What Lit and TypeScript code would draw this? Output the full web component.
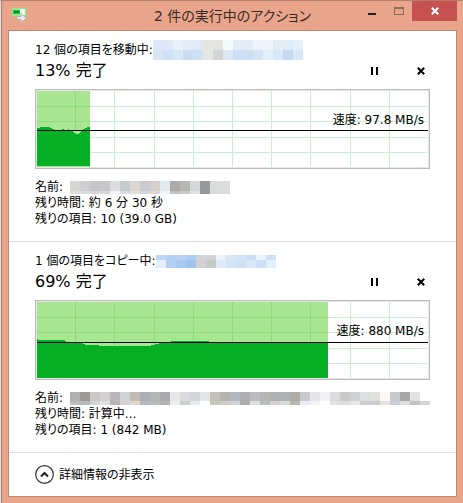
import { LitElement, html, css, svg } from "lit";
import { customElement, property } from "lit/decorators.js";

interface Job {
  heading: string;
  percent: string;
  speed: string;
  remaining: string;
  items: string;
  progress: number;
  level: number;
  area: string;
  target: string[][];
  targetSplit: number;
  targetHeight: number;
  file: string[][];
  fileSplit: number;
}

const jobs: Job[] = [
  {
    heading: "12 個の項目を移動中:",
    percent: "13% 完了",
    speed: "速度: 97.8 MB/s",
    remaining: "残り時間: 約 6 分 30 秒",
    items: "残りの項目: 10 (39.0 GB)",
    progress: 53,
    level: 39,
    area: "M0 37h3v-1h10v1h2v1h2v1h8v-1h2v1h4v-1h1v1h4v2h1v1h1v1h4v-1h1v-1h1v-1h1v-1h1v-1h2v-1h2v-1h3v39H0z",
    target: [
      ["#dce9f8", "#dde9f9", "#e9f1fb", "#e4ebf8", "#dfeaf8", "#e6e5e2", "#e4e4e4", "#f5faff", "#e2edf9", "#e4ecf8", "#eef5fc", "#f0f5fd", "#e0ecf8", "#e0ecf8", "#e4f0fa"],
      ["#dbe6f5", "#cfe1f6", "#d9e8f8", "#cadcf4", "#cde0f5", "#e9e7e2", "#d4d5d6", "#dde6f2", "#cae0f6", "#ccdff5", "#d5e5f5", "#e6f0fb", "#d8e8f8", "#c4d8f2", "#d9e8f8"],
    ],
    targetSplit: 10,
    targetHeight: 20,
    file: [
      ["#d5d7d3", "#cfcdd2", "#c6c6c6", "#c8c8cb", "#e0dbe0", "#c5cdcb", "#dbd6d4", "#c7ccd1", "#d8cfcd", "#e0e9ee", "#aea9a4", "#b5b7b7", "#d4d8d7", "#9a979d", "#dadcda", "#dadddb"],
      ["#dcdedc", "#dcdcde", "#d6d6d6", "#d8d8da", "#f6f4f6", "#d8e0de", "#e2dedc", "#d4d8dc", "#e0d8d6", "#edf4f8", "#c4c1be", "#c8caca", "#dee2e0", "#9a979d", "#dadcda", "#dadddb"],
    ],
    fileSplit: 10,
  },
  {
    heading: "1 個の項目をコピー中:",
    percent: "69% 完了",
    speed: "速度: 880 MB/s",
    remaining: "残り時間: 計算中...",
    items: "残りの項目: 1 (842 MB)",
    progress: 291,
    level: 40,
    area: "M0 37h1v1h27v1h1v1h9v1h8v1h2v1h14v1h52v-1h4v-1h4v-1h3v-1h9v-1h38v1h119v36H0z",
    target: [
      ["#bed9f5", "#b3d1f2", "#b9d3f4", "#aacdf2", "#d3d4d6", "#d2d3d5", "#eaf2fd", "#d9e7f8", "#d4e4f7", "#c9def5", "#ebf3fc", "#cfe0f5"],
      ["#e5eefa", "#b2d1f2", "#aacaf0", "#9fc3ee", "#d1d1d1", "#cbc7c5", "#e0ebfa", "#d2e4f7", "#cfe0f5", "#d9e8f8", "#cfe0f5", "#e5effb"],
    ],
    targetSplit: 5,
    targetHeight: 13,
    file: [
      ["#b0b0b2", "#9e9a98", "#c8cac8", "#d2d0d2", "#bdb8b8", "#cfd4d8", "#c4bcb3", "#a9b0b8", "#b4b4b2", "#aaabae", "#e8e7e5", "#dcdce0", "#d0d6d8", "#e6e4e4", "#c2c2ba", "#b8b4ac", "#b2bcc0", "#aeaeb0", "#bcbcbc", "#b4b6b0", "#b0b0ae", "#acb2b4", "#aeaca6", "#c8c8d0", "#e6e6e6", "#f0f2f4", "#dcdada", "#cacaca", "#d2d0d2", "#dce0e2", "#e0e2e0", "#fdf7f0", "#c6cacc", "#a8a8aa", "#e2e2e4", "#ffffff"],
      ["#bcbcbe", "#b8b8b6", "#d0d4d4", "#e2e2e2", "#b8b4b4", "#d2d4d8", "#dcd6ce", "#b4b8be", "#b8bcc0", "#b4b4b6", "#eeeeee", "#cacece", "#e8ecee", "#ffffff", "#c8c8c0", "#d2ccc6", "#ced2d8", "#aeacb0", "#dce2e0", "#b8bcbc", "#d6d0ce", "#d6dcde", "#b8b8b2", "#ececf2", "#f4f2f6", "#ffffff", "#e2e0e2", "#dedede", "#e6e6e8", "#cececa", "#cacaca", "#e8e2de", "#ccd0d6", "#e0deda", "#c2c2be", "#d0d6da"],
    ],
    fileSplit: 9,
  },
];

const vertical = [38, 77, 117, 156, 195, 234, 273, 313, 352];
const horizontal = [15, 30, 46, 61];

// Two rows of ten-pixel blocks that stand in for a concealed name.
@customElement("pixel-strip")
class PixelStrip extends LitElement {
  @property({ attribute: false }) rows: string[][] = [];
  @property({ type: Number }) split = 10;
  @property({ type: Number }) total = 20;
  static styles = css`
    :host { display: block; min-width: 0; overflow: hidden; }
    svg { display: block; }
  `;
  render() {
    const w = (this.rows[0]?.length ?? 0) * 10;
    return html`<svg width=${w} height=${this.total} shape-rendering="crispEdges" aria-hidden="true">
      ${this.rows.map((row, r) =>
        row.map(
          (c, i) =>
            svg`<rect x=${i * 10} y=${r ? this.split : 0} width="10" height=${r ? this.total - this.split : this.split} fill=${c}></rect>`
        )
      )}
    </svg>`;
  }
}

@customElement("job-panel")
class JobPanel extends LitElement {
  @property({ attribute: false }) job!: Job;
  static styles = css`
    :host { display: block; border-bottom: 1px solid #dfdfdf; padding: 11px 26px 14px; }
    .heading, .name { display: flex; align-items: center; height: 16px; white-space: nowrap; }
    .name { gap: 7px; }
    .status { display: flex; align-items: center; height: 26px; margin-bottom: 5px; }
    .percent { flex: 1; margin: 0; font-size: 16px; font-weight: 400; line-height: 26px; }
    .actions { display: flex; gap: 28px; }
    button { width: 18px; height: 18px; padding: 0; border: 0; background: none; display: grid; place-items: center; color: #000; }
    .graph { position: relative; height: 76px; border: 1px solid #bbb; padding: 1px; background: #e6e6e6; }
    .graph svg { display: block; width: 100%; height: 76px; background: #fff; }
    .speed { position: absolute; right: 5px; top: 22px; line-height: 16px; }
    .details { margin-top: 10px; line-height: 16px; }
  `;
  render() {
    const j = this.job;
    return html`
      <div class="heading"><span>${j.heading}</span><pixel-strip .rows=${j.target} .split=${j.targetSplit} .total=${j.targetHeight}></pixel-strip></div>
      <div class="status">
        <h2 class="percent">${j.percent}</h2>
        <div class="actions">
          <button aria-label="一時停止"><svg width="8" height="8" shape-rendering="crispEdges"><path d="M0 0h2v8H0zM5 0h2v8H5z" /></svg></button>
          <button aria-label="キャンセル"><svg width="8" height="8"><path d="M.8.8l6.4 6.4M7.2.8L.8 7.2" stroke="#000" stroke-width="2" /></svg></button>
        </div>
      </div>
      <div class="graph">
        <svg viewBox="0 0 391 76" preserveAspectRatio="none" shape-rendering="crispEdges" aria-hidden="true">
          ${vertical.map((x) => svg`<rect x=${x} y="0" width="1" height="76" fill="#c8f0cf"></rect>`)}
          ${horizontal.map((y) => svg`<rect x="0" y=${y} width="390" height="1" fill="#c8f0cf"></rect>`)}
          <rect x="0" y="0" width=${j.progress} height="76" fill="#a8e692"></rect>
          ${vertical.filter((x) => x < j.progress).map((x) => svg`<rect x=${x} y="0" width="1" height="76" fill="#8cdc7a"></rect>`)}
          ${horizontal.map((y) => svg`<rect x="0" y=${y} width=${j.progress} height="1" fill="#8cdc7a"></rect>`)}
          <path d=${j.area} fill="#06b025"></path>
          <rect x="0" y=${j.level} width="391" height="1" fill="#000"></rect>
        </svg>
        <span class="speed">${j.speed}</span>
      </div>
      <div class="details">
        <div class="name"><span>名前:</span><pixel-strip .rows=${j.file} .split=${j.fileSplit} .total=${13}></pixel-strip></div>
        <div>${j.remaining}</div>
        <div>${j.items}</div>
      </div>
    `;
  }
}

@customElement("app-root")
class AppRoot extends LitElement {
  static styles = css`
    :host { display: flex; flex-direction: column; box-sizing: border-box; min-height: 100vh; background: #e9a58c; border-top: 1px solid #b37d6c; border-left: 1px solid #dce3e8; color: #000; font: 12px/16px "DejaVu Sans", "Noto Sans CJK JP", sans-serif; font-feature-settings: "palt"; }
    .bar { position: relative; display: flex; justify-content: center; height: 29px; border-left: 1px solid #b37d6c; }
    .title { margin: 0; font-size: 14px; font-weight: 400; line-height: 31px; color: #3a2a24; }
    .logo { position: absolute; left: 10px; top: 6px; }
    .controls { position: absolute; right: 6px; top: 0; display: flex; height: 20px; }
    .controls button { width: 27px; padding: 0; border: 0; background: none; display: grid; place-items: center; }
    .controls .close { width: 45px; background: #c75050; }
    .frame { flex: 1; display: flex; flex-direction: column; border-left: 1px solid #b37d6c; padding: 0 6px 6px; }
    .body { flex: 1; background: #fff; border: 1px solid #c58671; }
    .footer { display: flex; align-items: center; height: 43px; padding: 0 26px; }
    .toggle { display: flex; align-items: center; gap: 5px; border: 0; padding: 0; background: none; color: inherit; font: inherit; font-feature-settings: inherit; }
  `;
  render() {
    return html`
      <header class="bar">
        <svg class="logo" width="18" height="18" viewBox="0 0 18 18" aria-hidden="true">
          <rect x="0" y="1" width="14" height="8" rx="1" fill="#8ee88c" />
          <rect x="8" y="2" width="5" height="6" fill="#f4f8f4" />
          <rect x="1" y="3" width="7" height="4" fill="#2fbf45" />
          <path d="M2 4h5v2H2z" fill="#0a8a28" />
          <path d="M4.500 9.500h4.500V6.500l5.500 4.500-5.500 4.500v-3H7c-1.500 0-2.500-1-2.500-3z" fill="#e6e9ea" stroke="#b4b0ae" stroke-width="1" />
        </svg>
        <h1 class="title">2 件の実行中のアクション</h1>
        <div class="controls">
          <button aria-label="最小化"><svg width="8" height="8" shape-rendering="crispEdges"><rect y="6" width="8" height="2" fill="#222" /></svg></button>
          <button aria-label="最大化" disabled><svg width="10" height="8" shape-rendering="crispEdges"><path d="M0 0h10v8H0zM1 2v5h8V2z" fill="#8f6a5e" fill-rule="evenodd" /></svg></button>
          <button class="close" aria-label="閉じる"><svg width="8" height="8"><path d="M.8.8l6.4 6.4M7.2.8L.8 7.2" stroke="#fff" stroke-width="2" /></svg></button>
        </div>
      </header>
      <div class="frame">
        <main class="body">
          ${jobs.map((j) => html`<job-panel .job=${j}></job-panel>`)}
          <div class="footer">
            <button class="toggle">
              <svg width="19" height="19" viewBox="0 0 19 19" fill="none" aria-hidden="true">
                <circle cx="9.5" cy="9.5" r="8.8" stroke="#333" stroke-width="1.2" />
                <path d="M6 11.500l3.500-3.500 3.500 3.500" stroke="#222" stroke-width="2" />
              </svg>
              <span>詳細情報の非表示</span>
            </button>
          </div>
        </main>
      </div>
    `;
  }
}
